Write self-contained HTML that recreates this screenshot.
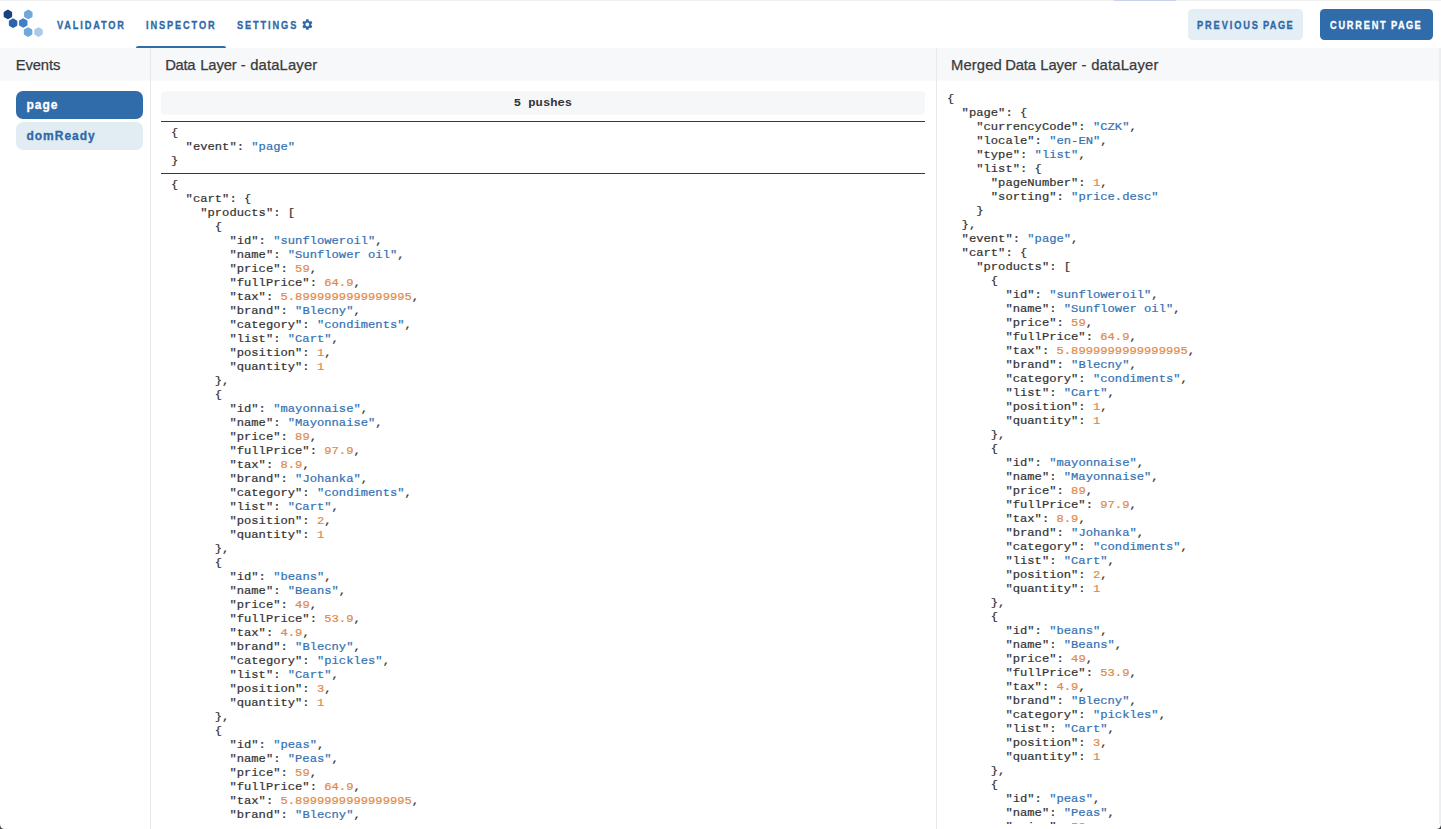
<!DOCTYPE html>
<html lang="en"><head><meta charset="utf-8"><title>Data Layer Inspector</title>
<style>
html,body{margin:0;padding:0}
body{width:1441px;height:829px;overflow:hidden;background:#fff;position:relative;font-family:"Liberation Sans",sans-serif;color:#333}
.abs{position:absolute}
.topline{left:0;top:0;width:1441px;height:1px;background:#f0f0f0}
.tab{position:absolute;top:18px;height:14px;line-height:14px;font-size:11px;font-weight:bold;letter-spacing:0.55px;color:#2f68a8;white-space:nowrap;transform:scaleX(0.84);transform-origin:0 50%;-webkit-text-stroke:0.3px}
.uline{left:136px;top:46px;width:90px;height:2px;background:#306baa;border-radius:2px 2px 0 0}
.btn{position:absolute;top:9px;height:30.8px;line-height:32px;border-radius:4.5px;font-size:11px;font-weight:bold;letter-spacing:0.5px;white-space:nowrap;box-sizing:border-box;padding-left:9.6px}
.w{position:absolute;top:0}
.pg{display:inline-block;transform-origin:0 50%}
.band{left:0;top:48px;width:1441px;height:33px;background:linear-gradient(to bottom,#f7f8fa 0,#f7f8fa 32px,#f9fafb 32px,#f9fafb 33px)}
.vline{top:48px;width:1px;height:781px;background:#e6e8eb}
.h{margin:0;font-weight:normal;position:absolute;top:54.5px;height:20px;line-height:20px;font-size:14.8px;color:#3a3a3a;-webkit-text-stroke:0.25px;white-space:nowrap}
.ev{position:absolute;left:15.5px;width:127.5px;height:28px;line-height:28px;border-radius:7px;font-size:12px;font-weight:bold;letter-spacing:1px;box-sizing:border-box;padding-left:10.9px;-webkit-text-stroke:0.3px}
.pushes{left:161px;top:91px;width:764px;height:24px;line-height:25.5px;background:linear-gradient(to bottom,#fafafb 0,#fafafb 1px,#f6f7f9 1px,#f6f7f9 23px,#fafafb 23px,#fafafb 24px);border-radius:4px;text-align:center;font-family:"Liberation Mono",monospace;font-size:10.8px;font-weight:bold;color:#333}
.hr{left:161px;width:764px;height:1px;background:#3a3a3a}
pre{position:absolute;margin:0;font-family:"Liberation Mono",monospace;font-size:10.8px;line-height:14px;color:#333;white-space:pre;transform:scaleX(1.1264);transform-origin:0 0;-webkit-text-stroke:0.2px}
.s{color:#3471b3}
.n{color:#e08a45}
.clip{left:0;top:823.5px;width:1441px;height:5.5px;background:#fff}
.redge{left:1438.7px;top:48px;width:2.3px;height:776px;background:#eceeef}
</style></head><body>
<header>
<div class="abs topline"></div>
<div class="abs" style="left:1114px;top:0;width:62px;height:1px;background:#c9d3e8"></div>
<svg class="abs" style="left:0;top:0" width="50" height="48" viewBox="0 0 50 48"><polygon points="7.90,10.70 11.10,12.55 11.10,16.25 7.90,18.10 4.70,16.25 4.70,12.55" fill="#16427e" stroke="#16427e" stroke-width="2.1" stroke-linejoin="round"/><polygon points="13.10,19.50 16.30,21.35 16.30,25.05 13.10,26.90 9.90,25.05 9.90,21.35" fill="#2a64ab" stroke="#2a64ab" stroke-width="2.1" stroke-linejoin="round"/><polygon points="23.25,19.30 26.45,21.15 26.45,24.85 23.25,26.70 20.05,24.85 20.05,21.15" fill="#3f80c6" stroke="#3f80c6" stroke-width="2.1" stroke-linejoin="round"/><polygon points="28.30,10.70 31.50,12.55 31.50,16.25 28.30,18.10 25.10,16.25 25.10,12.55" fill="#72a7da" stroke="#72a7da" stroke-width="2.1" stroke-linejoin="round"/><polygon points="28.10,28.40 31.30,30.25 31.30,33.95 28.10,35.80 24.90,33.95 24.90,30.25" fill="#6fa8dc" stroke="#6fa8dc" stroke-width="2.1" stroke-linejoin="round"/><polygon points="38.50,28.40 41.70,30.25 41.70,33.95 38.50,35.80 35.30,33.95 35.30,30.25" fill="#a9cbe8" stroke="#a9cbe8" stroke-width="2.1" stroke-linejoin="round"/></svg>
<nav>
<div class="tab" style="left:56.6px;letter-spacing:2.176px">VALIDATOR</div>
<div class="tab" style="left:146.07px;letter-spacing:2.214px">INSPECTOR</div>
<div class="tab" style="left:237.09px;letter-spacing:2.234px">SETTINGS</div>
<svg class="abs" style="left:300.6px;top:17.8px" width="12.7" height="13.2" viewBox="0 0 24 24" preserveAspectRatio="none"><path fill="#2f68a8" d="M19.14 12.94c.04-.3.06-.61.06-.94s-.02-.64-.07-.94l2.03-1.58a.49.49 0 0 0 .12-.61l-1.92-3.32a.49.49 0 0 0-.59-.22l-2.39.96a7 7 0 0 0-1.62-.94l-.36-2.54a.48.48 0 0 0-.48-.41h-3.84a.47.47 0 0 0-.47.41l-.36 2.54c-.59.24-1.13.57-1.62.94l-2.39-.96a.48.48 0 0 0-.59.22L2.74 8.87a.47.47 0 0 0 .12.61l2.03 1.58c-.05.3-.09.63-.09.94s.02.64.07.94l-2.03 1.58a.49.49 0 0 0-.12.61l1.92 3.32c.12.22.37.29.59.22l2.39-.96c.5.38 1.030.7 1.62.94l.36 2.54c.05.24.24.41.48.41h3.84c.24 0 .44-.17.47-.41l.36-2.54c.59-.24 1.13-.56 1.62-.94l2.39.96c.22.08.47 0 .59-.22l1.92-3.32a.47.47 0 0 0-.12-.61zM12 15.6A3.6 3.6 0 1 1 12 8.4a3.6 3.6 0 0 1 0 7.2z"/></svg>
<div class="abs uline"></div>
</nav>
<div class="actions">
<div class="btn" style="left:1187.5px;width:115px;background:#e3eef5"></div>
<div class="tab" style="left:1197.0px;letter-spacing:2.25px">PREVIOUS</div><div class="tab" style="left:1263.2px;letter-spacing:1.65px">PAGE</div>
<div class="btn" style="left:1320px;width:112.5px;background:#306baa"></div>
<div class="tab" style="left:1329.9px;letter-spacing:2.1px;color:#fff">CURRENT</div><div class="tab" style="left:1391.3px;letter-spacing:1.7px;color:#fff">PAGE</div>
</div>
</header>
<div class="abs band"></div>
<div class="abs redge"></div>
<aside>
<h2 class="h" style="left:0"><span class="w" style="left:15.65px;letter-spacing:-0.12px">Events</span></h2>
<div class="ev" style="top:91px;background:#306baa;color:#fff">page</div>
<div class="ev" style="top:122px;background:#e1edf3;color:#2f68a8">domReady</div>
</aside>
<section>
<h2 class="h" style="left:0"><span class="w" style="left:165.25px;letter-spacing:-0.37px">Data</span><span class="w" style="left:200.25px;letter-spacing:-0.12px">Layer</span><span class="w" style="left:240.80px;letter-spacing:0.00px">-</span><span class="w" style="left:250.20px;letter-spacing:0.15px">dataLayer</span></h2>
<div class="abs pushes"><span style="display:inline-block;transform:scaleX(1.1264)">5 pushes</span></div>
<div class="abs hr" style="top:121px"></div>
<pre style="left:170.6px;top:126.4px">{
  "event": <span class="s">"page"</span>
}</pre>
<div class="abs hr" style="top:173px"></div>
<pre style="left:170.6px;top:178.4px">{
  "cart": {
    "products": [
      {
        "id": <span class="s">"sunfloweroil"</span>,
        "name": <span class="s">"Sunflower oil"</span>,
        "price": <span class="n">59</span>,
        "fullPrice": <span class="n">64.9</span>,
        "tax": <span class="n">5.8999999999999995</span>,
        "brand": <span class="s">"Blecny"</span>,
        "category": <span class="s">"condiments"</span>,
        "list": <span class="s">"Cart"</span>,
        "position": <span class="n">1</span>,
        "quantity": <span class="n">1</span>
      },
      {
        "id": <span class="s">"mayonnaise"</span>,
        "name": <span class="s">"Mayonnaise"</span>,
        "price": <span class="n">89</span>,
        "fullPrice": <span class="n">97.9</span>,
        "tax": <span class="n">8.9</span>,
        "brand": <span class="s">"Johanka"</span>,
        "category": <span class="s">"condiments"</span>,
        "list": <span class="s">"Cart"</span>,
        "position": <span class="n">2</span>,
        "quantity": <span class="n">1</span>
      },
      {
        "id": <span class="s">"beans"</span>,
        "name": <span class="s">"Beans"</span>,
        "price": <span class="n">49</span>,
        "fullPrice": <span class="n">53.9</span>,
        "tax": <span class="n">4.9</span>,
        "brand": <span class="s">"Blecny"</span>,
        "category": <span class="s">"pickles"</span>,
        "list": <span class="s">"Cart"</span>,
        "position": <span class="n">3</span>,
        "quantity": <span class="n">1</span>
      },
      {
        "id": <span class="s">"peas"</span>,
        "name": <span class="s">"Peas"</span>,
        "price": <span class="n">59</span>,
        "fullPrice": <span class="n">64.9</span>,
        "tax": <span class="n">5.8999999999999995</span>,
        "brand": <span class="s">"Blecny"</span>,
        "category": <span class="s">"condiments"</span>,
        "list": <span class="s">"Cart"</span>,
        "position": <span class="n">4</span>,
        "quantity": <span class="n">1</span>
      },
      {
        "id": <span class="s">"corn"</span>,
        "name": <span class="s">"Corn"</span>,
        "price": <span class="n">39</span>,
        "fullPrice": <span class="n">42.9</span>,
        "tax": <span class="n">3.9</span>,
        "brand": <span class="s">"Blecny"</span>,
        "category": <span class="s">"pickles"</span>,
        "list": <span class="s">"Cart"</span>,
        "position": <span class="n">5</span>,
        "quantity": <span class="n">1</span>
      }
    ]
  }
}</pre>
</section>
<section>
<h2 class="h" style="left:0"><span class="w" style="left:950.95px;letter-spacing:0.14px">Merged</span><span class="w" style="left:1005.25px;letter-spacing:-0.17px">Data</span><span class="w" style="left:1040.35px;letter-spacing:-0.10px">Layer</span><span class="w" style="left:1081.50px;letter-spacing:0.00px">-</span><span class="w" style="left:1091.20px;letter-spacing:0.17px">dataLayer</span></h2>
<pre style="left:946.75px;top:92.4px">{
  "page": {
    "currencyCode": <span class="s">"CZK"</span>,
    "locale": <span class="s">"en-EN"</span>,
    "type": <span class="s">"list"</span>,
    "list": {
      "pageNumber": <span class="n">1</span>,
      "sorting": <span class="s">"price.desc"</span>
    }
  },
  "event": <span class="s">"page"</span>,
  "cart": {
    "products": [
      {
        "id": <span class="s">"sunfloweroil"</span>,
        "name": <span class="s">"Sunflower oil"</span>,
        "price": <span class="n">59</span>,
        "fullPrice": <span class="n">64.9</span>,
        "tax": <span class="n">5.8999999999999995</span>,
        "brand": <span class="s">"Blecny"</span>,
        "category": <span class="s">"condiments"</span>,
        "list": <span class="s">"Cart"</span>,
        "position": <span class="n">1</span>,
        "quantity": <span class="n">1</span>
      },
      {
        "id": <span class="s">"mayonnaise"</span>,
        "name": <span class="s">"Mayonnaise"</span>,
        "price": <span class="n">89</span>,
        "fullPrice": <span class="n">97.9</span>,
        "tax": <span class="n">8.9</span>,
        "brand": <span class="s">"Johanka"</span>,
        "category": <span class="s">"condiments"</span>,
        "list": <span class="s">"Cart"</span>,
        "position": <span class="n">2</span>,
        "quantity": <span class="n">1</span>
      },
      {
        "id": <span class="s">"beans"</span>,
        "name": <span class="s">"Beans"</span>,
        "price": <span class="n">49</span>,
        "fullPrice": <span class="n">53.9</span>,
        "tax": <span class="n">4.9</span>,
        "brand": <span class="s">"Blecny"</span>,
        "category": <span class="s">"pickles"</span>,
        "list": <span class="s">"Cart"</span>,
        "position": <span class="n">3</span>,
        "quantity": <span class="n">1</span>
      },
      {
        "id": <span class="s">"peas"</span>,
        "name": <span class="s">"Peas"</span>,
        "price": <span class="n">59</span>,
        "fullPrice": <span class="n">64.9</span>,
        "tax": <span class="n">5.8999999999999995</span>,
        "brand": <span class="s">"Blecny"</span>,
        "category": <span class="s">"condiments"</span>,
        "list": <span class="s">"Cart"</span>,
        "position": <span class="n">4</span>,
        "quantity": <span class="n">1</span>
      },
      {
        "id": <span class="s">"corn"</span>,
        "name": <span class="s">"Corn"</span>,
        "price": <span class="n">39</span>,
        "fullPrice": <span class="n">42.9</span>,
        "tax": <span class="n">3.9</span>,
        "brand": <span class="s">"Blecny"</span>,
        "category": <span class="s">"pickles"</span>,
        "list": <span class="s">"Cart"</span>,
        "position": <span class="n">5</span>,
        "quantity": <span class="n">1</span>
      }
    ]
  }
}</pre>
</section>
<div class="abs clip"></div>
<div class="abs vline" style="left:150px"></div>
<div class="abs vline" style="left:936px"></div>
<svg class="abs" style="left:0;top:824px" width="5" height="5" viewBox="0 0 6 6"><path d="M0,0 Q0,6 6,6 L0,6 Z" fill="#4a4a4a"/></svg>
<svg class="abs" style="left:1436px;top:824px" width="5" height="5" viewBox="0 0 6 6"><path d="M6,0 Q6,6 0,6 L6,6 Z" fill="#3a3d40"/></svg>
</body></html>
